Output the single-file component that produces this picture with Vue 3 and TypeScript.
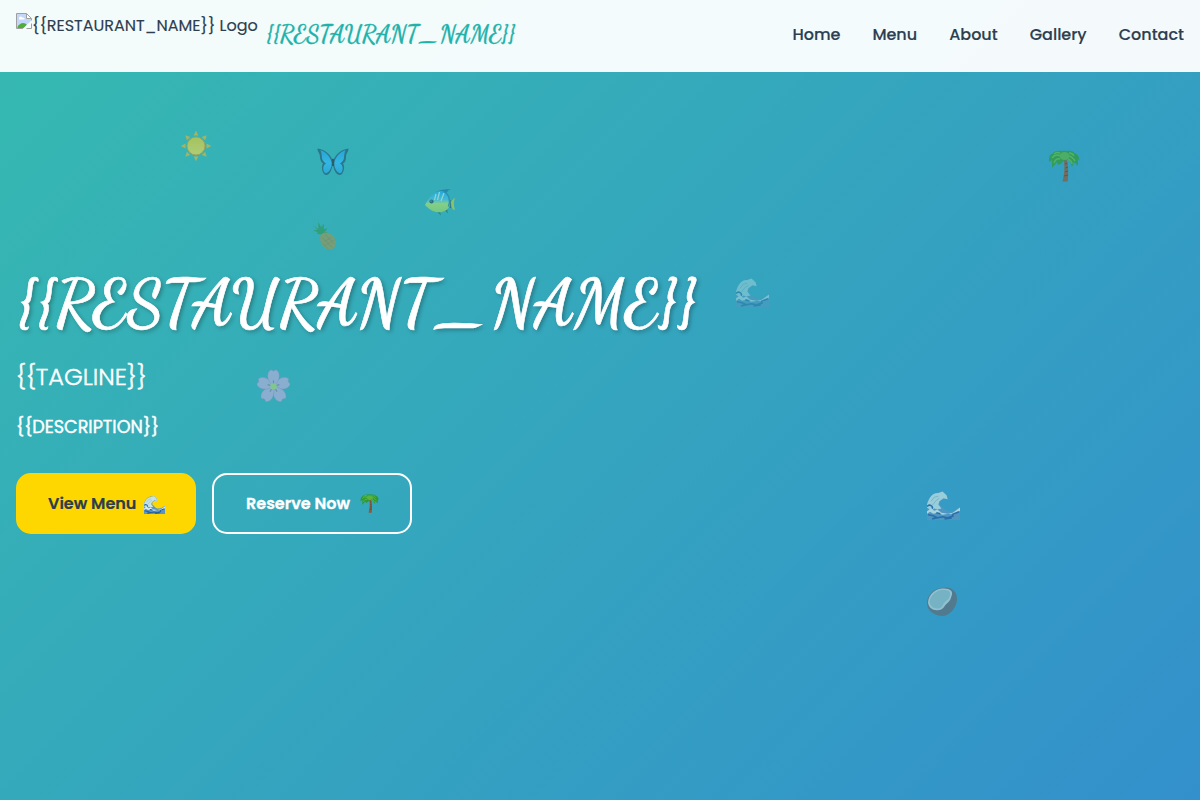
<script setup lang="ts">
interface Floater {
  id: string
  icon: string
}

const restaurantName = '{{RESTAURANT_NAME}}'
const tagline = '{{TAGLINE}}'
const description = '{{DESCRIPTION}}'
const links: string[] = ['Home', 'Menu', 'About', 'Gallery', 'Contact']

const floaters: Floater[] = [
  { id: 'sun', icon: 'sun' },
  { id: 'butterfly', icon: 'butterfly' },
  { id: 'fish', icon: 'fish' },
  { id: 'pineapple', icon: 'pineapple' },
  { id: 'palm', icon: 'palm' },
  { id: 'wave-top', icon: 'wave' },
  { id: 'flower', icon: 'flower' },
  { id: 'wave-low', icon: 'wave' },
  { id: 'coconut', icon: 'coconut' },
]
</script>

<template>
  <div class="page">
    <svg class="defs" aria-hidden="true">
      <defs>
        <linearGradient id="gSun" x1="0" y1="0" x2="0" y2="1">
          <stop offset="0" stop-color="#f0cc28" /><stop offset="1" stop-color="#ffe04c" />
        </linearGradient>
        <linearGradient id="gFish" x1="0" y1="0" x2="0" y2="1">
          <stop offset="0" stop-color="#18a9f4" /><stop offset=".4" stop-color="#4dc5ea" />
          <stop offset=".6" stop-color="#c6ea60" /><stop offset="1" stop-color="#a8e054" />
        </linearGradient>
        <linearGradient id="gWing" x1="0" y1="0" x2="0" y2="1">
          <stop offset="0" stop-color="#1fa0ef" /><stop offset=".55" stop-color="#35baff" /><stop offset="1" stop-color="#25a5ee" />
        </linearGradient>
      </defs>
      <symbol id="sun" viewBox="0 0 32 32">
        <g fill="#f0b52c">
          <path v-for="n in 8" :key="n" d="M16 .8 18.400 5.500H13.600Z" :transform="`rotate(${n * 45} 16 16)`" />
        </g>
        <circle cx="16" cy="16" r="9" fill="url(#gSun)" stroke="#e79a1e" stroke-width="1" />
      </symbol>
      <symbol id="butterfly" viewBox="0 0 32 32">
        <path d="M15.500 14C13 8 7 3 .5 2.500c0 4 2.500 4 2.500 9 .2 3 1.500 5 3 6-2 3-1 8 1 10.500 3.500 3 7-1 8.300-8h1C17.500 27 21.500 31 25 28c2-2.500 3-7.500 1-10.500 2-1 3-3 3-6C29 6.500 31.500 6.500 31.500 2.500 25 3 19 8 16.500 14Z" fill="#24526c" />
        <path d="M15 17C13 10 8.500 5.500 3.300 4.300c2 3 1.200 7 2.200 9.500 1 2 2 3 3.500 3.700-3 1.500-3.500 6-1.500 9C10 29 14.500 24 15 17ZM17 17C19 10 23.500 5.500 28.700 4.300c-2 3-1.200 7-2.200 9.500-1 2-2 3-3.500 3.700 3 1.500 3.500 6 1.500 9-2.500 2.500-7-2.500-7.500-9.500Z" fill="url(#gWing)" />
        <path d="M16 14v5" stroke="#282b35" stroke-width="2.400" stroke-linecap="round" />
      </symbol>
      <symbol id="fish" viewBox="0 0 32 32">
        <path d="M12 5C16 3 21 1.500 28 2.500c-4 0-5 2-6 6Z" fill="#176ca3" />
        <path d="M24 17c4-1 4-5 7-6-2 5-1 8 0 12-3 0-4-5-7-6Z" fill="#d2d729" />
        <path d="m26 13 .5 8" stroke="#27516a" stroke-width="1.800" />
        <path d="m11 23 6 5.500-1-4 5-1 3 3-1-5Z" fill="#2b665e" />
        <path d="M1 18C5 10 11 3 18 4c7 1 9 8 8 14-2 6-8 8-14 7C7 24 4 21 1 18Z" fill="url(#gFish)" />
        <path d="M19 4.500c6 2 8 9 5.500 15" fill="none" stroke="#1f7fae" stroke-width="1.500" />
        <path d="m12 7-1.500 6m5-8-2 8m6.500-7-3 8" stroke="#d4f5f2" stroke-width="1.300" />
        <circle cx="7.500" cy="14.500" r="2.100" fill="#224154" /><circle cx="7" cy="14" r=".6" fill="#cce" />
      </symbol>
      <symbol id="pineapple" viewBox="0 0 32 32">
        <path d="m10 15-5-1 2-1-6-3 5 0-4-5 5 4 0-8 3 6 3-4 0 6 4-1-3 4 3 0-3 4Z" fill="#2f9650" />
        <path d="M10 15C15 10 23 14 25.500 20c2 5 0 11-5 11-6 1-10-3-11-8-1-3-1-6 .5-8Z" fill="#a09450" />
        <path d="m11 18 11 11m-8-15 10 11m-13-1 7 7m4-13-9 5m11-2-10 6" stroke="#6f683a" stroke-width=".5" opacity=".6" />
      </symbol>
      <symbol id="palm" viewBox="0 0 32 32">
        <path d="M15.500 9h3c2 7 2 14 1.300 22.500h-5.300C16.500 23 17 17 15.500 9Z" fill="#8c5a3b" />
        <path d="m17 14 2.500-1m-2 5 2.500-1m-3 5 3-1m-4 5 4-1" stroke="#513a2b" stroke-width=".8" />
        <path d="M14 1C9 0 5 2 4 4 1 5 1 8 1 12l3-2v8l5-6 1 3c4-1 4-4 8-5 4-1 5 4 6 7l2-5 4 4v-7l1.500 1.500C31 5.500 29 4 27 3.500 25 1 22 .5 19 1c-2-.5-3-.5-5 0Z" fill="#2f9a34" />
        <path d="M13 6C9 4 6 5 4 8m8 1c-3-1-5 1-6 4m14-7c3 0 5 2 7 5m-7-2c2 1 4 3 4 5M12 3C9 2 7 3 6 4m15-1c3 0 4 1 5 3" fill="none" stroke="#62bb3c" stroke-width="1.500" />
        <ellipse cx="16.500" cy="6" rx="5" ry="4" fill="#58b340" />
      </symbol>
      <symbol id="wave" viewBox="0 0 32 32">
        <path d="M0 29V13C2 6 7 2 12 2.500l3-1 4.500 4 .5 4-3-1-4 2-.5 3.500 4.500 4.500c4 4 10 2 15-2v12.500Z" fill="#5c94c2" />
        <path d="M0 14C2 7 6 2.500 11 3l4-1.500 4 3.500 1 4-4-1-4 3-1 3 3 4-4 1-3-1-3 2-4-3Z" fill="#c6e3e4" />
        <path d="M0 20.500 4 18l3 2 3-1 4 3 6 1 5-1 7-5v3l-6 4-5-1-6 1-5-2-4 1-3-2-3 2Z" fill="#dcecea" />
        <path d="M0 16c3-3 6 0 5 2M1 24l5 1 4 2 5-1 5 1 6-2M5 28l4-1m8 1 7-1M9 22l4 1m11 1 7-3" fill="none" stroke="#225f9f" stroke-width="1.600" />
        <path d="m4 11 3-4 4-1m-6 9 4-5 3-2" stroke="#8db7c8" stroke-width=".8" fill="none" />
      </symbol>
      <symbol id="flower" viewBox="0 0 32 32">
        <path v-for="n in 5" :key="n" d="M16 17C9 11 9 3 13.500.7l2.500 1.300 2.500-1.300c4.500 2.300 4.500 10.300-2.500 16.300Z" :transform="`rotate(${n * 72} 16 17)`" fill="#b8b0dc" stroke="#9289b8" stroke-width=".4" />
        <path v-for="n in 5" :key="'v' + n" d="M16 16v-5" :transform="`rotate(${n * 72} 16 17)`" stroke="#8480ae" stroke-width="1.200" />
        <circle cx="16" cy="17" r="3.200" fill="#a8d576" />
      </symbol>
      <symbol id="coconut" viewBox="0 0 32 32">
        <path d="M1 18C1 11 7 4 15 3c5-1 9-1 12 2 3 2 4 6 4 10-1 9-8 16-15 16C8 30 1 26 1 18Z" fill="#66666a" />
        <path d="M2 18C2 11 8 4 16 3.500c6 0 11 1 10 6-1 3-1 5-4 8-4 3-4 7-9 7.500C7 26 3 23 2 18Z" fill="#cfdcd8" />
        <path d="M3.500 17C4.500 10 10.500 5.500 16 5c6 0 9 1 8 5-1 3-1 4-4 6-4 3-3 7.500-8 7.500-5 0-7-2-8.500-6.500Z" fill="#a0c3c4" />
      </symbol>
    </svg>

    <header class="header">
      <div class="brand">
        <div class="logo">
          <svg class="broken" viewBox="0 0 16 16" aria-hidden="true">
            <path d="M1 1h10v4.500h4.500V8L8 15H1Z" fill="#c3d7fa" />
            <path d="M3 6.500C2.500 4 5 2.500 6 4.500c2-.5 3 1 2.500 2Z" fill="#fff" />
            <path d="M1.500 15v-1C4 9 9 9 11 12l-3 3Z" fill="#4fae38" />
            <path d="M10.500.500v5h5Z" fill="#fff" stroke="#a0a0a0" />
            <path d="M15.500 6v9.500H.500V.500h10" fill="none" stroke="#a0a0a0" />
            <path d="m6.500 16 9.500-9v3l-6 6Z" fill="#f8fcfc" />
          </svg>
          <span>{{ restaurantName }} Logo</span>
        </div>
        <span class="brand-name">{{ restaurantName }}</span>
      </div>
      <nav class="nav">
        <a v-for="link in links" :key="link">{{ link }}</a>
      </nav>
    </header>

    <main class="hero">
      <h1 class="title">{{ restaurantName }}</h1>
      <p class="tagline">{{ tagline }}</p>
      <p class="description">{{ description }}</p>
      <div class="actions">
        <button class="btn primary"><span>View Menu</span><svg><use href="#wave" /></svg></button>
        <button class="btn outline"><span>Reserve Now</span><svg><use href="#palm" /></svg></button>
      </div>
    </main>

    <svg v-for="f in floaters" :key="f.id" class="floater" :class="f.id"><use :href="'#' + f.icon" /></svg>
  </div>
</template>

<style>
body { margin: 0; overflow: hidden; }
</style>

<style scoped>
.page {
  position: relative;
  height: 800px;
  overflow: hidden;
  background: linear-gradient(135deg, #36bab0 0%, #3390cc 100%);
  font-family: Poppins, Inter, "Noto Sans", sans-serif;
  color: #2c3e50;
}
.defs { position: absolute; width: 0; height: 0; }
.header {
  box-sizing: border-box;
  height: 72px;
  padding: 0 16px;
  display: flex;
  justify-content: space-between;
  background: rgba(255, 255, 255, .95);
}
.brand { display: flex; align-items: flex-start; gap: 8px; }
.logo { display: flex; width: 242px; padding-top: 13px; font-size: 16px; line-height: 25px; white-space: nowrap; }
.broken { width: 16px; height: 16px; flex: none; }
.brand-name, .title { font-family: "Dancing Script", Lato, sans-serif; font-weight: 700; white-space: nowrap; }
.brand-name {
  padding-top: 15px;
  font-size: 24px;
  font-weight: 600;
  line-height: 40px;
  color: #20b2aa;
  -webkit-text-stroke: .3px #20b2aa;
}
.nav { display: flex; gap: 32px; height: 69px; align-items: center; font-size: 16px; font-weight: 500; }
.hero { padding: 187px 16px 0; }
.title {
  margin: 0;
  font-size: 64px;
  line-height: 90px;
  color: #fff;
  text-shadow: 2px 2px 4px rgba(0, 0, 0, .3);
  -webkit-text-stroke: .6px #fff;
}
.tagline, .description { margin: 0; color: #fff; white-space: nowrap; -webkit-text-stroke: .4px #fff; }
.tagline { margin-top: 10px; font-size: 24px; line-height: 36px; font-weight: 300; }
.description { margin-top: 17px; font-size: 17.600px; line-height: 30px; font-weight: 400; }
.actions { display: flex; gap: 16px; margin-top: 31px; }
.btn {
  box-sizing: border-box;
  height: 61px;
  padding: 0 30px;
  display: flex;
  align-items: center;
  border: 2px solid #ffd700;
  border-radius: 15px;
  background: #ffd700;
  color: #2c3e50;
  font: inherit;
  font-size: 16px;
  font-weight: 600;
  white-space: nowrap;
}
.btn span { flex: none; }
.btn svg { width: 21px; height: 21px; flex: none; margin-left: auto; }
.primary { width: 180px; }
.primary svg { margin-right: -1px; margin-top: 4px; }
.outline { width: 200px; padding: 0 32px; border-color: #fff; background: transparent; color: #fff; }
.outline svg { width: 19px; height: 19px; margin-right: -1px; }
.outline span { -webkit-text-stroke: .3px #fff; }
.primary span { -webkit-text-stroke: .2px #2c3e50; }
.nav a, .logo span { -webkit-text-stroke: .15px #2c3e50; }
.floater { position: absolute; width: 32px; height: 32px; opacity: .6; }
.sun { left: 180px; top: 130px; }
.butterfly { left: 317px; top: 146px; }
.fish { left: 424px; top: 187px; opacity: .55; }
.pineapple { left: 312px; top: 221px; width: 29px; height: 29px; }
.palm { left: 1048px; top: 150px; opacity: .7; }
.wave-top { left: 736px; top: 277px; width: 33px; height: 33px; opacity: .4; }
.flower { left: 257px; top: 369px; width: 33px; height: 33px; opacity: .65; }
.wave-low { left: 927px; top: 490px; width: 33px; height: 33px; opacity: .7; }
.coconut { left: 926px; top: 585px; }
</style>
